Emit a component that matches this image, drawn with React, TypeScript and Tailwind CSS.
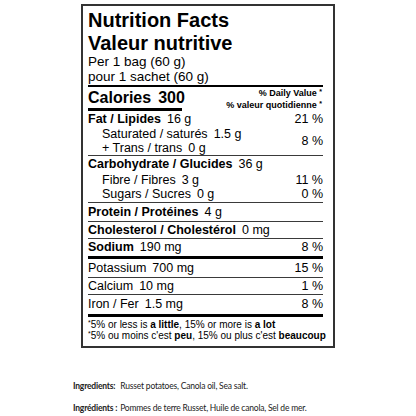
type RowProps = {
  label: string;
  amount?: string;
  dv?: string;
  bold?: boolean;
  indent?: boolean;
  h: string;
};

function Row({ label, amount, dv, bold = true, indent = false, h }: RowProps) {
  return (
    <div className={`flex items-center justify-between ${h}`}>
      <p className={indent ? "pl-[14px]" : ""}>
        <span className={bold ? "font-bold" : ""}>{label}</span>
        {amount && <span className="ml-[6px]">{amount}</span>}
      </p>
      {dv && <p className="text-right">{dv}</p>}
    </div>
  );
}

function Thin() {
  return <div className="h-px bg-[#3a3a3a]" />;
}

function Thick() {
  return <div className="h-[3px] bg-black" />;
}

export default function App() {
  return (
    <div className="w-[416px] h-[416px] bg-white text-black font-['Liberation_Sans',Arial,sans-serif]">
      <div className="pt-[4px] pl-[81px]">
        <div className="w-[254px] border-2 border-[#333] pl-[5px] pr-[10px] pt-[3px] pb-[5px]">
          <p className="text-[20px] font-bold leading-[23px]">Nutrition Facts</p>
          <p className="text-[20px] font-bold leading-[22px]">Valeur nutritive</p>
          <p className="text-[13.5px] leading-[15px]">Per 1 bag (60 g)</p>
          <p className="text-[13.5px] leading-[15px]">pour 1 sachet (60 g)</p>
          <div className="mt-[1px] h-[2px] bg-black" />

          <div className="flex justify-between items-start h-[25px]">
            <div className="pt-[2px]">
              <p className="text-[16px] font-bold leading-[18px]">
                Calories<span className="ml-[7px]">300</span>
              </p>
              <div className="mt-[1px] h-[3px] w-[94px] bg-black" />
            </div>
            <div className="text-right text-[9px] font-bold leading-[12px] pr-[1px]">
              <p>
                % Daily Value <span className="align-top text-[7px] leading-[9px]">*</span>
              </p>
              <p>
                % valeur quotidienne <span className="align-top text-[7px] leading-[9px]">*</span>
              </p>
            </div>
          </div>

          <div className="text-[12.5px]">
            <Row label="Fat / Lipides" amount="16 g" dv="21 %" h="h-[15px]" />
            <div className="flex items-center justify-between">
              <div className="pl-[14px] leading-[14px]">
                <p>
                  Saturated / saturés<span className="ml-[6px]">1.5 g</span>
                </p>
                <p>
                  + Trans / trans<span className="ml-[6px]">0 g</span>
                </p>
              </div>
              <p>8 %</p>
            </div>
            <Thin />
            <Row label="Carbohydrate / Glucides" amount="36 g" h="h-[17px]" />
            <Row label="Fibre / Fibres" amount="3 g" dv="11 %" bold={false} indent h="h-[14px]" />
            <Row label="Sugars / Sucres" amount="0 g" dv="0 %" bold={false} indent h="h-[15px]" />
            <Thin />
            <Row label="Protein / Protéines" amount="4 g" h="h-[18px]" />
            <Thin />
            <Row label="Cholesterol / Cholestérol" amount="0 mg" h="h-[16px]" />
            <Thin />
            <Row label="Sodium" amount="190 mg" dv="8 %" h="h-[17px]" />
            <Thick />
            <Row label="Potassium" amount="700 mg" dv="15 %" bold={false} h="h-[18px]" />
            <Thin />
            <Row label="Calcium" amount="10 mg" dv="1 %" bold={false} h="h-[16px]" />
            <Thin />
            <Row label="Iron / Fer" amount="1.5 mg" dv="8 %" bold={false} h="h-[19px]" />
            <Thick />
          </div>

          <div className="pt-[2px] text-[10px] leading-[11px] whitespace-nowrap">
            <p>
              <span className="align-top text-[7px] leading-[8px]">*</span>5% or less is{" "}
              <span className="font-bold">a little</span>, 15% or more is{" "}
              <span className="font-bold">a lot</span>
            </p>
            <p>
              <span className="align-top text-[7px] leading-[8px]">*</span>5% ou moins c'est{" "}
              <span className="font-bold">peu</span>, 15% ou plus c'est{" "}
              <span className="font-bold">beaucoup</span>
            </p>
          </div>
        </div>
      </div>

      <div className="pl-[73px] pt-[33px] text-[8.5px] leading-[11px] tracking-[-0.2px] text-[#222] font-['Lato',sans-serif]">
        <p>
          <span className="font-bold">Ingredients:</span>
          <span className="ml-[5px]">Russet potatoes, Canola oil, Sea salt.</span>
        </p>
        <p className="mt-[11px]">
          <span className="font-bold">Ingrédients :</span>
          <span className="ml-[3px]">Pommes de terre Russet, Huile de canola, Sel de mer.</span>
        </p>
      </div>
    </div>
  );
}
